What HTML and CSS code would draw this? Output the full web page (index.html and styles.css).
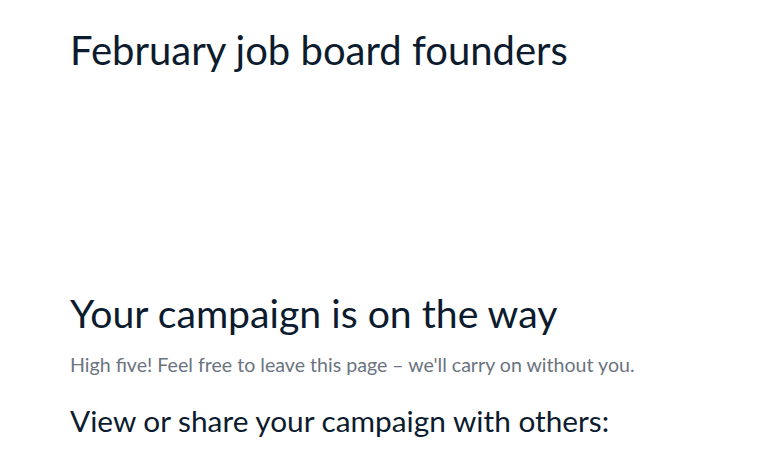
FILE: index.html
```html
<!DOCTYPE html>
<html>
<head>
<meta charset="utf-8">
<link rel="stylesheet" href="styles.css">
</head>
<body>
<main class="page">
  <h1 class="title">February job board founders</h1>
  <section class="done">
    <h2 class="done-title">Your campaign is on the way</h2>
    <p class="done-sub">High five! Feel free to leave this page – we'll carry on without you.</p>
    <h3 class="share-title">View or share your campaign with others:</h3>
  </section>
</main>
</body>
</html>
```
FILE: styles.css
```css
html, body {
  margin: 0;
  padding: 0;
  background: #ffffff;
}
body {
  font-family: Lato, "Open Sans", sans-serif;
  color: #0c1c2e;
}
.page {
  padding: 26px 70px 0;
}
.title {
  margin: 0;
  font-size: 40px;
  font-weight: 400;
  line-height: 48px;
}
.done {
  margin-top: 215px;
}
.done-title {
  margin: 0;
  font-size: 39.2px;
  font-weight: 400;
  line-height: 48px;
}
.done-sub {
  margin: 14px 0 0;
  font-size: 19.6px;
  line-height: 28px;
  color: #6b7480;
}
.share-title {
  margin: 22px 0 0;
  font-size: 29.8px;
  font-weight: 400;
  line-height: 40px;
}
```
